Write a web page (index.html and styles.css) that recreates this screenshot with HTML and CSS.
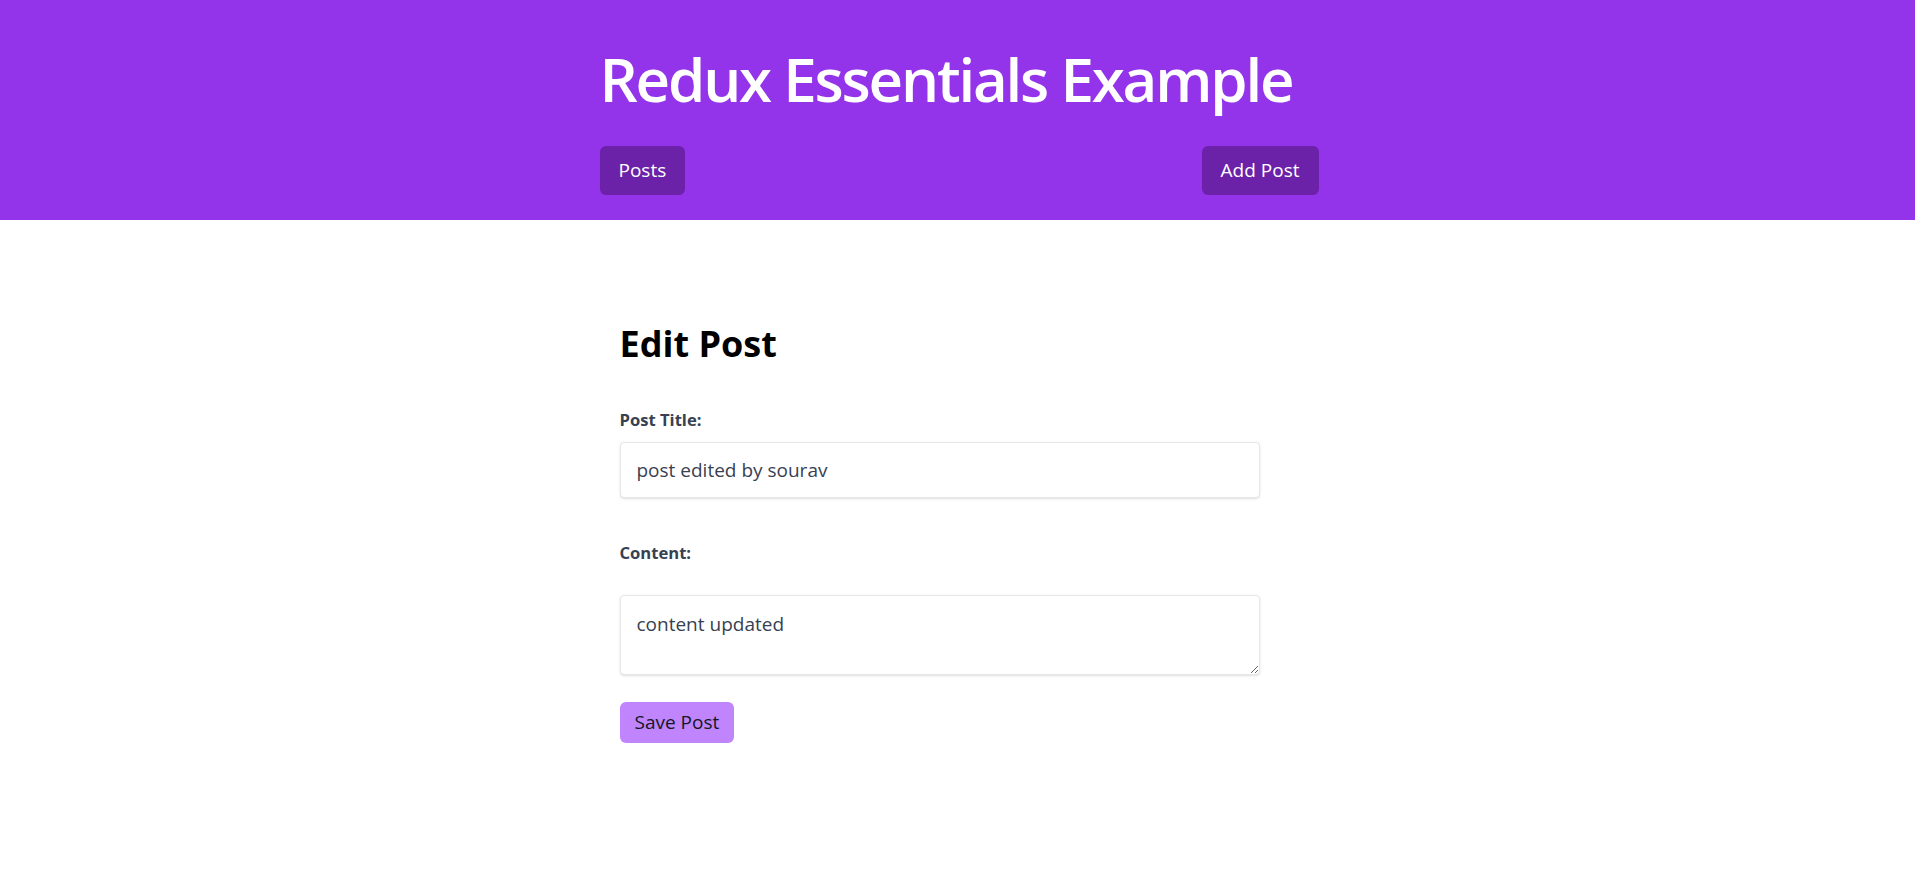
FILE: index.html
```html
<!DOCTYPE html>
<html lang="en">
<head>
<meta charset="utf-8">
<title>Redux Essentials Example</title>
<link rel="stylesheet" href="styles.css">
</head>
<body>
<header class="site-header">
  <div class="container">
    <h1 class="site-title">Redux Essentials Example</h1>
    <nav class="nav">
      <a class="nav-button" href="#">Posts</a>
      <a class="nav-button" href="#">Add Post</a>
    </nav>
  </div>
</header>
<main class="container">
  <section class="edit-section">
    <h2 class="edit-title">Edit Post</h2>
    <form class="edit-form">
      <label class="field-label label-title" for="postTitle">Post Title:</label>
      <input class="field-input" id="postTitle" type="text" value="post edited by sourav">
      <label class="field-label label-content" for="postContent">Content:</label>
      <textarea class="field-textarea" id="postContent">content updated</textarea>
      <button class="save-button" type="button">Save Post</button>
    </form>
  </section>
</main>
</body>
</html>
```
FILE: styles.css
```css
* {
  box-sizing: border-box;
}

html, body {
  margin: 0;
  padding: 0;
  background: #ffffff;
}

body {
  font-family: "Open Sans", "Noto Sans", sans-serif;
  color: #111827;
}

.container {
  width: 722px;
  padding-left: 3px;
  margin: 0 auto;
}

.site-header {
  background: #9333ea;
  padding: 43px 0 25px;
}

.site-title {
  margin: 0;
  font-size: 60px;
  line-height: 72px;
  font-weight: 600;
  letter-spacing: -2.2px;
  color: #ffffff;
}

.nav {
  margin-top: 31px;
  display: flex;
  justify-content: space-between;
  align-items: center;
}

.nav-button {
  display: block;
  background: #6b21a8;
  color: #ffffff;
  text-decoration: none;
  font-size: 19px;
  line-height: 25px;
  padding: 12px 19px;
  border-radius: 6px;
}

.edit-section {
  padding: 104px 0 0 20px;
}

.edit-title {
  margin: 0;
  font-size: 36px;
  line-height: 40px;
  font-weight: 700;
  color: #000000;
}

.edit-form {
  width: 640px;
  display: flex;
  flex-direction: column;
  align-items: flex-start;
}

.field-label {
  display: block;
  font-size: 16.6px;
  line-height: 24px;
  font-weight: 700;
  color: #374151;
}

.label-title {
  margin-top: 44px;
}

.label-content {
  margin-top: 43px;
}

.field-input,
.field-textarea {
  display: block;
  width: 640px;
  border: 1px solid #e5e7eb;
  border-radius: 4px;
  background: #ffffff;
  color: #374151;
  font-family: "Open Sans", "Noto Sans", sans-serif;
  font-size: 19px;
  box-shadow: 0 1px 3px 0 rgba(0, 0, 0, 0.1), 0 1px 2px -1px rgba(0, 0, 0, 0.1);
  outline: none;
}

.field-input {
  margin-top: 10px;
  height: 56px;
  padding: 0 16px;
}

.field-textarea {
  margin-top: 30px;
  height: 80px;
  padding: 16px;
  line-height: 24px;
  resize: vertical;
}

.save-button {
  margin-top: 27px;
  background: #c084fc;
  color: #111827;
  border: none;
  border-radius: 6px;
  font-family: "Open Sans", "Noto Sans", sans-serif;
  font-size: 19px;
  line-height: 25px;
  padding: 8px 15px;
  cursor: pointer;
}
```
